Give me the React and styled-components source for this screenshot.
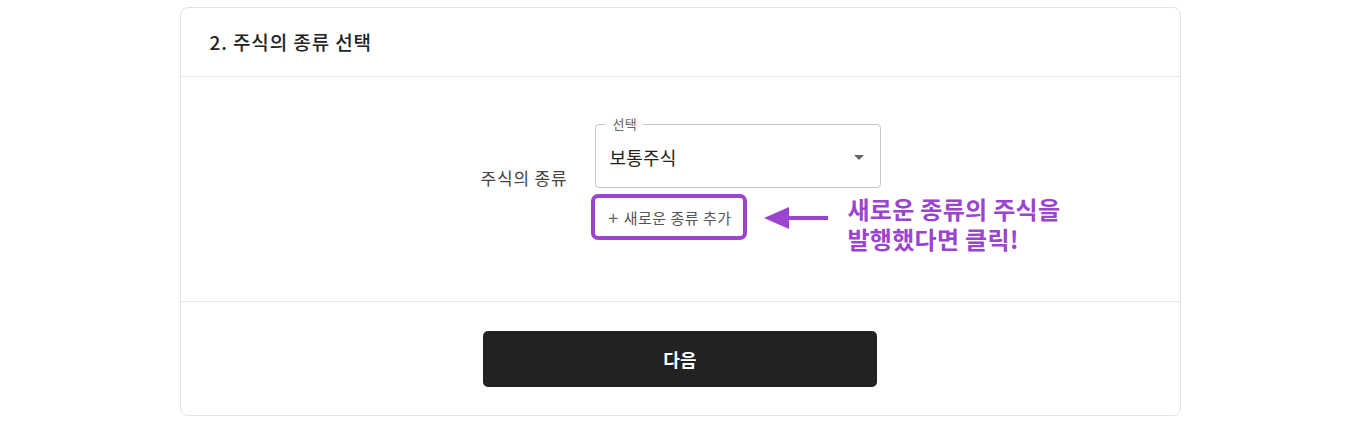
import React from "react";
import styled, { createGlobalStyle } from "styled-components";

const Global = createGlobalStyle`
  html, body { margin: 0; padding: 0; background: #fff; }
  body { font-family: "Noto Sans CJK KR", "Noto Sans", sans-serif; color: #222; }
`;

const Page = styled.div`
  padding-top: 7px;
  display: flex;
  justify-content: center;
`;

const Card = styled.section`
  width: 1001px;
  box-sizing: border-box;
  border: 1px solid #e3e3e3;
  border-radius: 8px;
  background: #fff;
`;

const Header = styled.header`
  height: 69px;
  box-sizing: border-box;
  padding-left: 29px;
  padding-bottom: 1px;
  display: flex;
  align-items: center;
  border-bottom: 1px solid #e6e6e6;
  font-size: 19px;
  font-weight: 500;
  color: #222;
  letter-spacing: 0.9px;
`;

const Body = styled.div`
  height: 225px;
  box-sizing: border-box;
  border-bottom: 1px solid #e6e6e6;
  display: flex;
  justify-content: center;
  padding-top: 47px;
`;

const Row = styled.div`
  display: flex;
  align-items: flex-start;
  gap: 28px;
  margin-left: 2px;
`;

const Label = styled.div`
  margin-top: 42px;
  font-size: 17px;
  color: #444;
  line-height: 24px;
  letter-spacing: 0.8px;
`;

const Field = styled.div`
  position: relative;
  display: flex;
  flex-direction: column;
  align-items: flex-start;
`;

const Select = styled.div`
  position: relative;
  width: 286px;
  height: 64px;
  box-sizing: border-box;
  border: 1px solid #c4c4c4;
  border-radius: 4px;
  display: flex;
  align-items: center;
  padding: 0 16px 0 13px;
  justify-content: space-between;
`;

const Legend = styled.span`
  position: absolute;
  top: -10px;
  left: 10px;
  padding: 0 6px;
  background: #fff;
  font-size: 13px;
  line-height: 18px;
  color: #666;
  letter-spacing: 0.3px;
`;

const Value = styled.span`
  font-size: 18px;
  color: #222;
  margin-top: 1px;
  letter-spacing: 0.2px;
`;

const Caret = styled.span`
  width: 0;
  height: 0;
  border-left: 5px solid transparent;
  border-right: 5px solid transparent;
  border-top: 5px solid #666;
  margin-top: 2px;
`;

const AddButton = styled.button`
  margin-top: 6px;
  margin-left: -4px;
  width: 156px;
  height: 46px;
  box-sizing: border-box;
  border: 4px solid #9b44cf;
  border-radius: 7px;
  background: #fff;
  font-family: inherit;
  font-size: 15px;
  color: #555;
  padding: 0 0 0 1px;
  display: flex;
  align-items: center;
  justify-content: center;
  gap: 5px;
  letter-spacing: 0.5px;
  white-space: nowrap;
  cursor: pointer;
`;

const Plus = styled.span`
  font-size: 18px;
  line-height: 1;
  color: #666;
  margin-top: -1px;
`;

const Annotation = styled.div`
  position: absolute;
  left: 169px;
  top: 70px;
  display: flex;
  align-items: flex-start;
  gap: 19px;
  white-space: nowrap;
`;

const Arrow = styled.svg`
  margin-top: 12px;
  flex: none;
`;

const Note = styled.div`
  font-size: 24px;
  font-weight: 700;
  line-height: 30px;
  color: #9b44cf;
  letter-spacing: 0.3px;
`;

const Footer = styled.footer`
  height: 113px;
  display: flex;
  justify-content: center;
  align-items: flex-start;
  padding-top: 29px;
  box-sizing: border-box;
`;

const NextButton = styled.button`
  width: 394px;
  height: 56px;
  border: none;
  border-radius: 5px;
  background: #222;
  color: #fff;
  font-family: inherit;
  font-size: 18px;
  font-weight: 700;
  letter-spacing: 0.3px;
  cursor: pointer;
`;

export default function App() {
  return (
    <>
      <Global />
      <Page>
        <Card>
          <Header>2. 주식의 종류 선택</Header>
          <Body>
            <Row>
              <Label>주식의 종류</Label>
              <Field>
                <Select>
                  <Legend>선택</Legend>
                  <Value>보통주식</Value>
                  <Caret />
                </Select>
                <AddButton>
                  <Plus>+</Plus>새로운 종류 추가
                </AddButton>
                <Annotation>
                  <Arrow width="64" height="24" viewBox="0 0 64 24">
                    <polygon points="0,12 25,1 25,23" fill="#9b44cf" />
                    <rect x="24" y="10" width="40" height="4" fill="#9b44cf" />
                  </Arrow>
                  <Note>
                    새로운 종류의 주식을
                    <br />
                    발행했다면 클릭!
                  </Note>
                </Annotation>
              </Field>
            </Row>
          </Body>
          <Footer>
            <NextButton>다음</NextButton>
          </Footer>
        </Card>
      </Page>
    </>
  );
}
